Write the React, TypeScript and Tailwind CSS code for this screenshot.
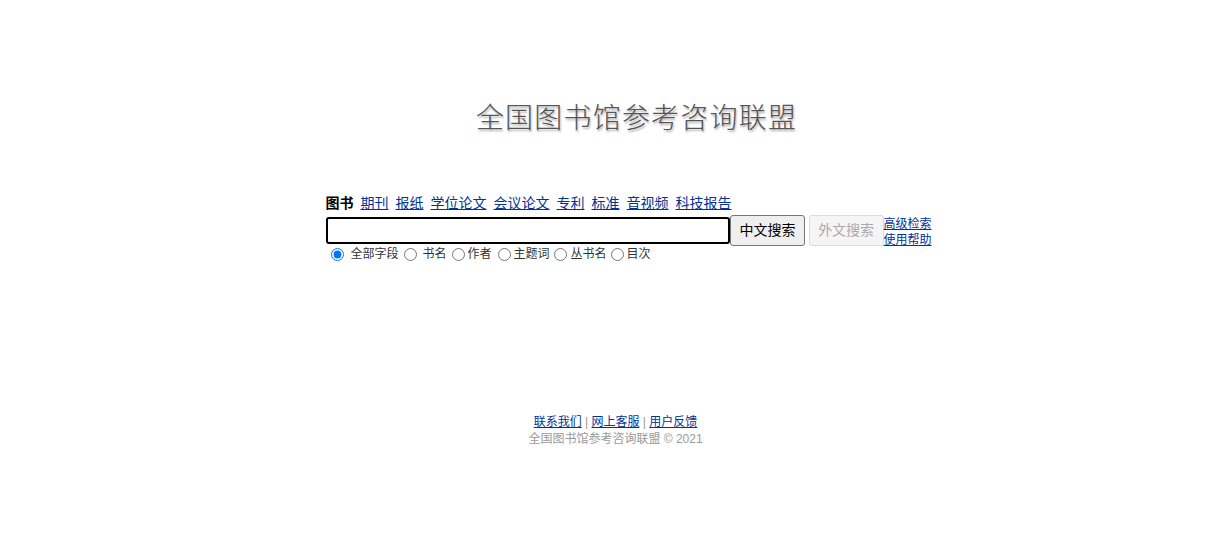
import React, { useState } from "react";

const FONT = { fontFamily: '"Liberation Sans", Arial, "Noto Sans CJK SC", sans-serif' };

const tabs = ["期刊", "报纸", "学位论文", "会议论文", "专利", "标准", "音视频", "科技报告"];
const fields = [
  { label: "全部字段", cls: "ml-[5px] mr-[7px] h-[13px] w-[13px]" },
  { label: "书名", cls: "ml-[5px] mr-[6px] h-[13px] w-[13px]" },
  { label: "作者", cls: "ml-[5px] mr-[3px] h-[13px] w-[13px]" },
  { label: "主题词", cls: "ml-[6px] mr-[3px] h-[13px] w-[13px]" },
  { label: "丛书名", cls: "ml-[4px] mr-[4px] h-[13px] w-[13px]" },
  { label: "目次", cls: "ml-[4px] mr-[3px] h-[13px] w-[13px]" },
];

export default function App() {
  const [field, setField] = useState(0);

  return (
    <div className="min-h-screen w-full bg-white text-black" style={FONT}>
      <div className="pt-[100px] flex justify-center">
        <h1
          className="pl-[64px] text-[28px] leading-[38px] font-light text-[#555]"
          style={{ textShadow: "1px 2px 2px rgba(0,0,0,0.3)", letterSpacing: "1.2px" }}
        >
          全国图书馆参考咨询联盟
        </h1>
      </div>

      <div className="mx-auto mt-[56px] w-[654px] pl-[48px]">
        <div className="flex items-center gap-[7px] whitespace-nowrap text-[14px] leading-[18px]">
          <span className="font-bold">图书</span>
          {tabs.map(t => (
            <a key={t} href="#" className="text-[#003399] underline">{t}</a>
          ))}
        </div>

        <div className="mt-[3px] flex items-start">
          <input
            type="text"
            className="mt-[2px] h-[27px] w-[406px] rounded-[3px] border-2 border-black bg-white px-1 text-[13px] outline-none"
          />
          <button className="h-[31px] w-[75px] rounded-[3px] border border-[#767676] bg-[#efefef] text-[14px] text-black">
            中文搜索
          </button>
          <button disabled className="ml-[4px] h-[31px] w-[75px] rounded-[3px] border border-[#dcdcdc] bg-[#f5f5f5] text-[14px] text-[#a9a9a9]">
            外文搜索
          </button>
          <div className="flex flex-col whitespace-nowrap pt-[1px] text-[12px] leading-[16px]">
            <a href="#" className="text-[#003399] underline">高级检索</a>
            <a href="#" className="text-[#003399] underline">使用帮助</a>
          </div>
        </div>

        <div className="-mt-[2px] flex items-center whitespace-nowrap text-[12px] leading-[16px] text-[#333]">
          {fields.map((f, i) => (
            <label key={f.label} className="flex items-center">
              <input
                type="radio"
                name="field"
                checked={field === i}
                onChange={() => setField(i)}
                className={f.cls}
              />
              <span>{f.label}</span>
            </label>
          ))}
        </div>
      </div>

      <div className="mt-[152px] flex flex-col items-center pl-[22px] text-[12px] leading-[17px]">
        <div className="text-[#999]">
          <a href="#" className="text-[#003399] underline">联系我们</a>
          <span> | </span>
          <a href="#" className="text-[#003399] underline">网上客服</a>
          <span> | </span>
          <a href="#" className="text-[#003399] underline">用户反馈</a>
        </div>
        <div className="text-[#999]">全国图书馆参考咨询联盟 © 2021</div>
      </div>
    </div>
  );
}
